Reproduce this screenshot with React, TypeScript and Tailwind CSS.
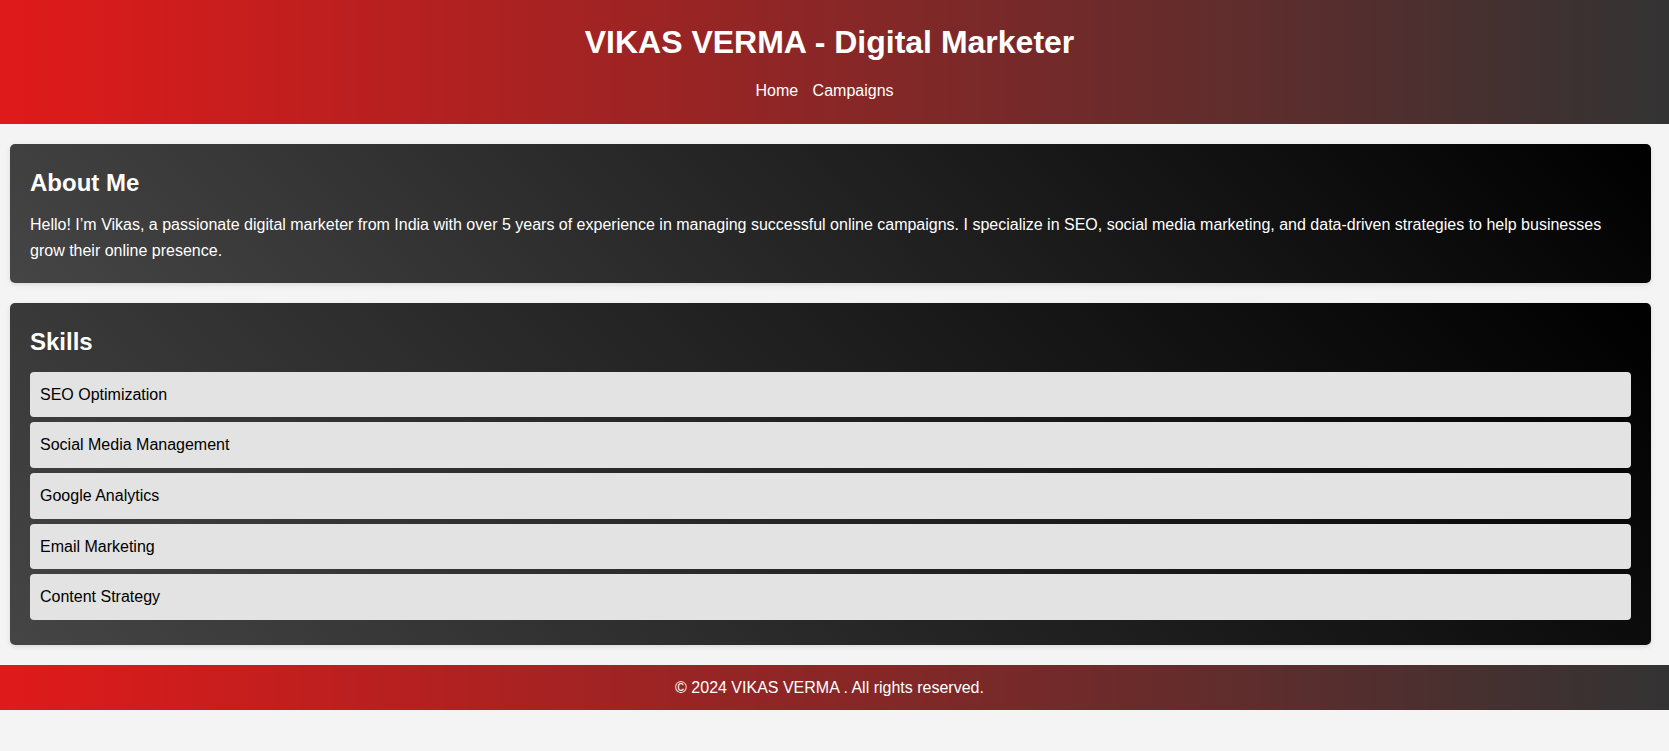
export default function App() {
  const skills = [
    "SEO Optimization",
    "Social Media Management",
    "Google Analytics",
    "Email Marketing",
    "Content Strategy",
  ];

  return (
    <div className="min-h-[751px] bg-[#f4f4f4] font-['Liberation_Sans',Arial,sans-serif] text-[16px] leading-[1.6] text-black">
      {/* Header */}
      <header className="bg-[linear-gradient(to_right,#e01a1a,#333333)] pt-[17px] pb-[20px] pr-[10px] text-center text-white">
        <h1 className="text-[32px] font-bold leading-[1.6]">
          VIKAS VERMA - Digital Marketer
        </h1>
        <nav className="mt-[10px]">
          <a href="#" className="mr-[10px]">Home</a>{" "}
          <a href="#" className="mr-[10px]">Campaigns</a>
        </nav>
      </header>

      <main className="ml-[10px] mr-[18px] pt-[20px]">
        {/* About */}
        <section className="rounded-[5px] bg-[linear-gradient(45deg,#454545,#000000)] p-[20px] text-white shadow-[0_2px_5px_rgba(0,0,0,0.1)]">
          <h2 className="mb-[10px] text-[24px] font-bold leading-[1.6]">
            About Me
          </h2>
          <p>
            Hello! I’m Vikas, a passionate digital marketer from India with over 5 years of experience in managing successful online campaigns. I specialize in SEO, social media marketing, and data-driven strategies to help businesses grow their online presence.
          </p>
        </section>

        {/* Skills */}
        <section className="mt-[20px] rounded-[5px] bg-[linear-gradient(45deg,#454545,#000000)] p-[20px] text-white shadow-[0_2px_5px_rgba(0,0,0,0.1)]">
          <h2 className="mb-[10px] text-[24px] font-bold leading-[1.6]">
            Skills
          </h2>
          <ul>
            {skills.map((skill) => (
              <li
                key={skill}
                className="mb-[5px] rounded-[4px] bg-[#e3e3e3] p-[10px] text-black"
              >
                {skill}
              </li>
            ))}
          </ul>
        </section>
      </main>

      {/* Footer */}
      <footer className="mt-[20px] bg-[linear-gradient(to_right,#e01a1a,#333333)] py-[10px] pr-[10px] text-center text-white">
        © 2024 VIKAS VERMA . All rights reserved.
      </footer>
    </div>
  );
}
